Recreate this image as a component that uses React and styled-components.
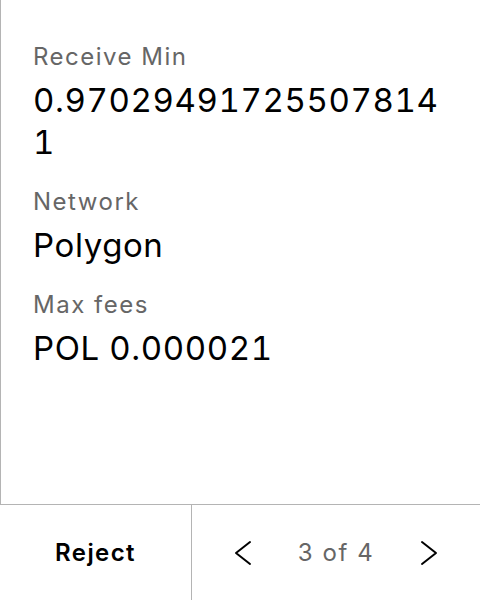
import styled, { createGlobalStyle } from 'styled-components'

const GlobalStyle = createGlobalStyle`
  html, body {
    margin: 0;
    padding: 0;
    background: #ffffff;
    font-family: Inter, "Noto Sans", sans-serif;
  }
`

const Screen = styled.div`
  display: flex;
  flex-direction: column;
  width: 480px;
  height: 100vh;
  box-sizing: border-box;
`

const Details = styled.section`
  flex: 1;
  display: flex;
  flex-direction: column;
  gap: 24px;
  padding: 42px 30px 0 32px;
  border-left: 1px solid #b4b4b4;
`

const Field = styled.div`
  display: flex;
  flex-direction: column;
  gap: 7px;
`

const Label = styled.span`
  font-size: 24px;
  line-height: 30px;
  letter-spacing: 1.5px;
  color: #666666;
`

const Value = styled.span`
  font-size: 33px;
  line-height: 42px;
  letter-spacing: 0.6px;
  font-variant-numeric: tabular-nums;
  color: #000000;
  word-break: break-all;
`

const Footer = styled.footer`
  display: flex;
  height: 96px;
  box-sizing: border-box;
  border-top: 1px solid #b4b4b4;
`

const RejectButton = styled.button`
  width: 192px;
  border: none;
  border-right: 1px solid #b4b4b4;
  background: transparent;
  font-family: inherit;
  font-size: 24px;
  font-weight: 600;
  letter-spacing: 1.4px;
  color: #000000;
  padding: 0;
`

const Pager = styled.div`
  flex: 1;
  display: flex;
  align-items: center;
  justify-content: center;
  gap: 43px;
`

const ArrowButton = styled.button`
  display: flex;
  align-items: center;
  justify-content: center;
  width: 24px;
  height: 28px;
  padding: 0;
  border: none;
  background: transparent;
  color: #000000;
`

const PageCount = styled.span`
  font-size: 24px;
  letter-spacing: 1.6px;
  color: #666666;
`

function Chevron({ dir }) {
  const d = dir === 'left' ? 'M16 2 L2 13 L16 24' : 'M2 2 L16 13 L2 24'
  return (
    <svg width="18" height="26" viewBox="0 0 18 26" fill="none">
      <path d={d} stroke="currentColor" strokeWidth="2" strokeLinecap="round" strokeLinejoin="round" />
    </svg>
  )
}

const fields = [
  { label: 'Receive Min', value: '0.970294917255078141' },
  { label: 'Network', value: 'Polygon' },
  { label: 'Max fees', value: 'POL 0.000021' },
]

export default function App() {
  return (
    <>
      <GlobalStyle />
      <Screen>
        <Details>
          {fields.map((field) => (
            <Field key={field.label}>
              <Label>{field.label}</Label>
              <Value>{field.value}</Value>
            </Field>
          ))}
        </Details>
        <Footer>
          <RejectButton>Reject</RejectButton>
          <Pager>
            <ArrowButton aria-label="Previous">
              <Chevron dir="left" />
            </ArrowButton>
            <PageCount>3 of 4</PageCount>
            <ArrowButton aria-label="Next">
              <Chevron dir="right" />
            </ArrowButton>
          </Pager>
        </Footer>
      </Screen>
    </>
  )
}
